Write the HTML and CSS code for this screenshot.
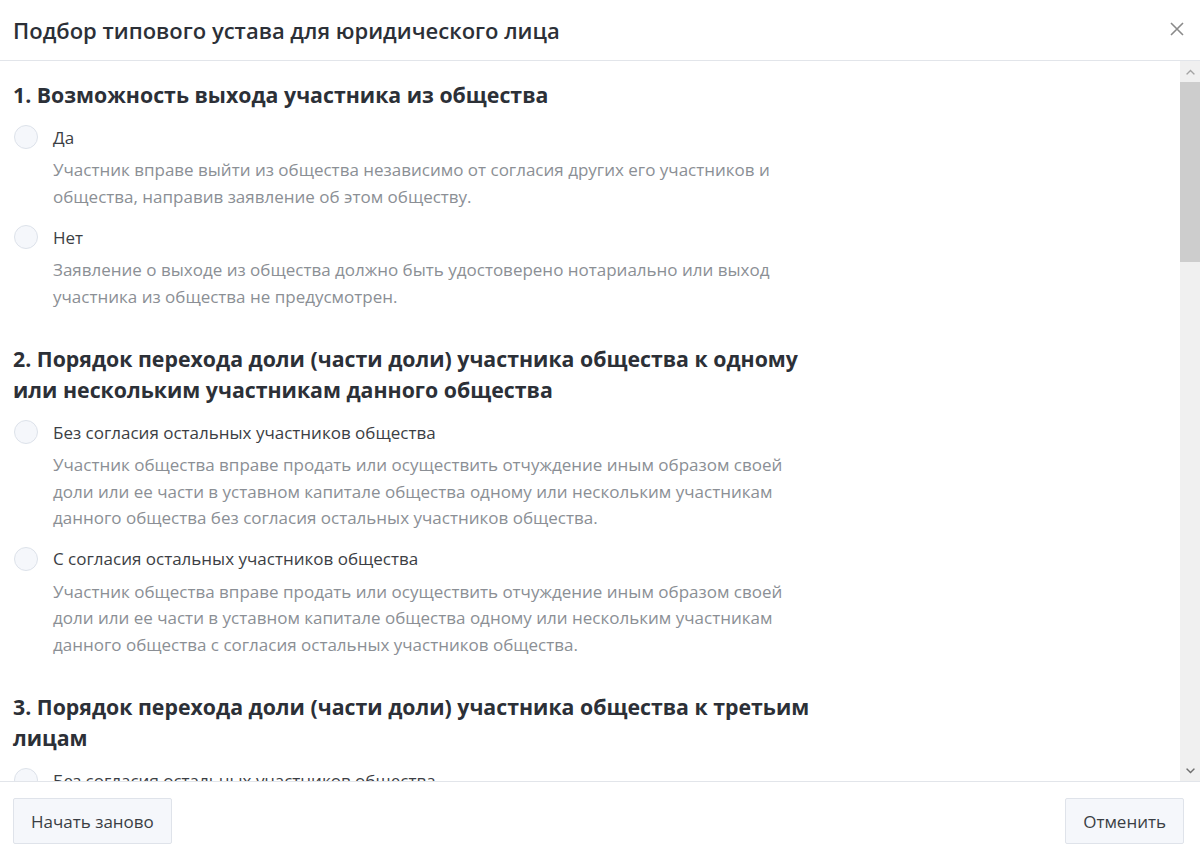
FILE: index.html
```html
<!DOCTYPE html>
<html lang="ru">
<head>
<meta charset="utf-8">
<title>Подбор типового устава</title>
<link rel="stylesheet" href="styles.css">
</head>
<body>
<div class="modal">
  <header class="header">
    <h1 class="title">Подбор типового устава для юридического лица</h1>
    <button class="close" aria-label="Закрыть">
      <svg width="14" height="14" viewBox="0 0 14 14"><path d="M1 1L13 13M13 1L1 13" stroke="#8a8a8a" stroke-width="1.6" fill="none"/></svg>
    </button>
  </header>
  <div class="main">
    <div class="content">
      <section class="question">
        <h2 class="q-title">1. Возможность выхода участника из общества</h2>
        <div class="option">
          <div class="opt-row"><span class="radio"></span><span class="label">Да</span></div>
          <p class="desc">Участник вправе выйти из общества независимо от согласия других его участников и общества, направив заявление об этом обществу.</p>
        </div>
        <div class="option">
          <div class="opt-row"><span class="radio"></span><span class="label">Нет</span></div>
          <p class="desc">Заявление о выходе из общества должно быть удостоверено нотариально или выход участника из общества не предусмотрен.</p>
        </div>
      </section>
      <section class="question">
        <h2 class="q-title">2. Порядок перехода доли (части доли) участника общества к одному или нескольким участникам данного общества</h2>
        <div class="option">
          <div class="opt-row"><span class="radio"></span><span class="label">Без согласия остальных участников общества</span></div>
          <p class="desc">Участник общества вправе продать или осуществить отчуждение иным образом своей доли или ее части в уставном капитале общества одному или нескольким участникам данного общества без согласия остальных участников общества.</p>
        </div>
        <div class="option">
          <div class="opt-row"><span class="radio"></span><span class="label">С согласия остальных участников общества</span></div>
          <p class="desc">Участник общества вправе продать или осуществить отчуждение иным образом своей доли или ее части в уставном капитале общества одному или нескольким участникам данного общества с согласия остальных участников общества.</p>
        </div>
      </section>
      <section class="question">
        <h2 class="q-title">3. Порядок перехода доли (части доли) участника общества к третьим лицам</h2>
        <div class="option">
          <div class="opt-row"><span class="radio"></span><span class="label">Без согласия остальных участников общества</span></div>
          <p class="desc">Участник общества вправе продать или осуществить отчуждение иным образом своей доли или ее части в уставном капитале общества третьим лицам без согласия остальных участников общества.</p>
        </div>
      </section>
    </div>
    <div class="scrollbar">
      <div class="sb-btn">
        <svg width="9" height="6" viewBox="0 0 9 6"><path d="M0 5L4.5 0.5L9 5L7.8 5.8L4.5 2.6L1.2 5.8Z" fill="#a3a3a3"/></svg>
      </div>
      <div class="sb-thumb"></div>
      <div class="sb-track"></div>
      <div class="sb-btn">
        <svg width="9" height="6" viewBox="0 0 9 6"><path d="M0 1L4.5 5.5L9 1L7.8 0.2L4.5 3.4L1.2 0.2Z" fill="#6f6f6f"/></svg>
      </div>
    </div>
  </div>
  <footer class="footer">
    <button class="btn">Начать заново</button>
    <button class="btn">Отменить</button>
  </footer>
</div>
</body>
</html>
```
FILE: styles.css
```css
* { box-sizing: border-box; }
html, body { margin: 0; padding: 0; background: #fff; }
body {
  font-family: "Open Sans", "Noto Sans", sans-serif;
  color: #2e3238;
  width: 1200px;
  height: 860px;
  overflow: hidden;
}
.modal {
  display: flex;
  flex-direction: column;
  height: 860px;
}
.header {
  height: 61px;
  flex: none;
  border-bottom: 1px solid #e2e5ea;
  display: flex;
  align-items: center;
  justify-content: space-between;
  padding: 0 16px 0 13px;
}
.title {
  margin: 0;
  font-size: 22px;
  font-weight: 600;
  color: #2c3037;
}
.close {
  border: 0;
  background: none;
  padding: 0;
  width: 14px;
  height: 14px;
  display: flex;
  margin-top: -2px;
}
.main {
  flex: 1;
  display: flex;
  min-height: 0;
  overflow: hidden;
}
.content {
  flex: 1;
  padding: 18px 13px 0 13px;
  overflow: hidden;
}
.question { max-width: 822px; margin-bottom: 33px; }
.q-title {
  margin: 0 0 14px 0;
  font-size: 21.3px;
  font-weight: 700;
  line-height: 31px;
  color: #2c3037;
}
.option { margin-bottom: 14px; }
.opt-row {
  display: flex;
  align-items: center;
  gap: 15px;
  height: 26px;
  padding-left: 1px;
}
.radio {
  width: 24px;
  height: 24px;
  border-radius: 50%;
  border: 1px solid #dde2ea;
  background: #f5f7fb;
  flex: none;
}
.label {
  font-size: 17px;
  color: #3b3e44;
}
.desc {
  margin: 7px 0 0 40px;
  font-size: 17px;
  line-height: 26.5px;
  color: #8b8f95;
  max-width: 740px;
}
.scrollbar {
  width: 20px;
  flex: none;
  background: #f0f0f0;
  display: flex;
  flex-direction: column;
}
.sb-btn {
  height: 21px;
  display: flex;
  align-items: center;
  justify-content: center;
  flex: none;
}
.sb-thumb {
  height: 180px;
  background: #cdcdcd;
  flex: none;
}
.sb-track { flex: 1; }
.footer {
  height: 79px;
  flex: none;
  border-top: 1px solid #e2e5ea;
  display: flex;
  align-items: center;
  justify-content: space-between;
  padding: 0 16px 0 13px;
}
.btn {
  height: 46px;
  padding: 0 17px;
  font-family: "Open Sans", "Noto Sans", sans-serif;
  font-size: 17px;
  color: #3a3e44;
  background: #f5f7fb;
  border: 1px solid #dfe3ea;
  border-radius: 2px;
}
```
